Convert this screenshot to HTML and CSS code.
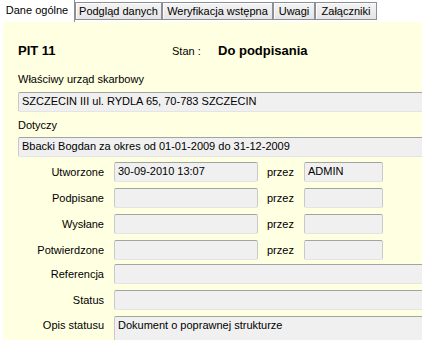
FILE: index.html
```html
<!DOCTYPE html>
<html>
<head>
<meta charset="utf-8">
<link rel="stylesheet" href="styles.css">
</head>
<body>
<div class="tabs">
  <div class="tab active">Dane ogólne</div>
  <div class="tab w86">Podgląd danych</div>
  <div class="tab w110">Weryfikacja wstępna</div>
  <div class="tab w41">Uwagi</div>
  <div class="tab w61">Załączniki</div>
  <div class="tab-rest"></div>
</div>
<div class="panel">
  <div class="content">
    <div class="header">
      <div class="title">PIT 11</div>
      <div class="stan">Stan :</div>
      <div class="title">Do podpisania</div>
    </div>
    <div class="label first">Właściwy urząd skarbowy</div>
    <div class="box wide">SZCZECIN III ul. RYDLA 65, 70-783 SZCZECIN</div>
    <div class="label second">Dotyczy</div>
    <div class="box wide">Bbacki Bogdan za okres od 01-01-2009 do 31-12-2009</div>
    <div class="grid">
      <div class="rl">Utworzone</div><div class="box">30-09-2010 13:07</div><div class="przez">przez</div><div class="box">ADMIN</div>
      <div class="rl">Podpisane</div><div class="box"></div><div class="przez">przez</div><div class="box"></div>
      <div class="rl">Wysłane</div><div class="box"></div><div class="przez">przez</div><div class="box"></div>
      <div class="rl">Potwierdzone</div><div class="box"></div><div class="przez">przez</div><div class="box"></div>
    </div>
    <div class="grid2">
      <div class="rl">Referencja</div><div class="box wide"></div>
      <div class="rl">Status</div><div class="box wide"></div>
      <div class="rl top">Opis statusu</div><div class="box wide tall">Dokument o poprawnej strukturze</div>
    </div>
  </div>
</div>
</body>
</html>
```
FILE: styles.css
```css
html, body {
  margin: 0;
  padding: 0;
  background: #ffffff;
  width: 422px;
  height: 341px;
  overflow: hidden;
}
body {
  font-family: "Liberation Sans", Arial, sans-serif;
  font-size: 11px;
  color: #000;
}
.tabs {
  display: flex;
  height: 21px;
  position: relative;
  z-index: 1;
}
.tab {
  box-sizing: border-box;
  height: 18px;
  margin-top: 2px;
  border: 1px solid #8d8f96;
  background: linear-gradient(#f4f4f4, #e5e5e5);
  box-shadow: inset 1px 1px 0 #fcfcfc;
  line-height: 16px;
  text-align: center;
  white-space: nowrap;
}
.tab.active {
  width: 75px;
  height: 22px;
  margin-top: 0;
  background: #ffffff;
  box-shadow: none;
  border: none;
  border-right: 1px solid #8d8f96;
  line-height: 20px;
}
.w86 { width: 87px; }
.w110 { width: 111px; }
.w41 { width: 42px; }
.w61 { width: 62px; }
.tab-rest {
  flex: 1;
}
.panel {
  background: #ffffff;
  padding: 1px 0 0 3px;
  height: 319px;
  box-sizing: border-box;
}
.content {
  background: #ffffe1;
  height: 100%;
  padding-left: 15px;
  overflow: hidden;
}
.header {
  display: grid;
  grid-template-columns: 154px 46px auto;
  align-items: center;
  padding-top: 21px;
  height: 16px;
  line-height: 16px;
}
.title {
  font-weight: bold;
  font-size: 13px;
}
.label {
  line-height: 14px;
}
.label.first { margin-top: 13px; margin-bottom: 6px; }
.label.second { margin-top: 6px; margin-bottom: 5px; }
.box {
  box-sizing: border-box;
  height: 20px;
  background: #f0f0f0;
  border: 1px solid;
  border-color: #a3a3a3 #c9c9c9 #e4e4e4 #c9c9c9;
  border-radius: 2px;
  padding-left: 3px;
  line-height: 17px;
  white-space: nowrap;
  overflow: hidden;
}
.box.wide {
  margin-right: -10px;
}
.box.tall {
  height: 40px;
}
.grid {
  display: grid;
  grid-template-columns: 96px 144px 46px 79px;
  row-gap: 6px;
  margin-top: 5px;
  align-items: center;
}
.grid .rl {
  padding-right: 10px;
}
.przez {
  padding-left: 9px;
}
.grid2 {
  display: grid;
  grid-template-columns: 86px 1fr;
  column-gap: 10px;
  row-gap: 6px;
  margin-top: 4px;
  align-items: center;
}
.rl.top {
  align-self: start;
  padding-top: 3px;
}
.rl {
  text-align: right;
  white-space: nowrap;
}
```
